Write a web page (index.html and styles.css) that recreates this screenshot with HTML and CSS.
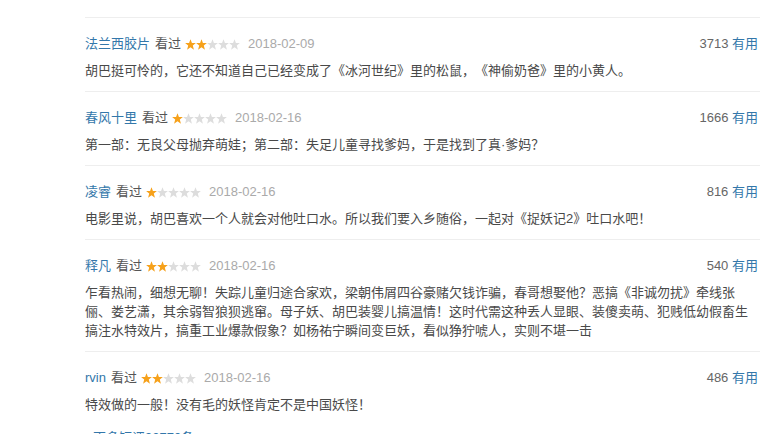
FILE: index.html
```html
<!DOCTYPE html>
<html lang="zh-CN">
<head>
    <meta charset="UTF-8">
    <meta name="viewport" content="width=device-width, initial-scale=1.0">
    <title>短评</title>
    <link rel="stylesheet" href="styles.css">
</head>
<body>
    <svg class="defs" width="0" height="0">
        <symbol id="star" viewBox="0 0 10 10">
            <polygon points="5,0.2 6.3,3.6 9.9,3.7 7.1,6 8.1,9.7 5,7.6 1.9,9.7 2.9,6 0.1,3.7 3.7,3.6"/>
        </symbol>
    </svg>

    <div class="comments">
        <!-- 短评 1 -->
        <div class="comment">
            <div class="comment-info">
                <a class="user" href="#">法兰西胶片</a>
                <span class="status">看过</span>
                <svg class="rating" width="55" height="11">
                    <use href="#star" x="0" width="11" height="11" class="on"/><use href="#star" x="11" width="11" height="11" class="on"/><use href="#star" x="22" width="11" height="11"/><use href="#star" x="33" width="11" height="11"/><use href="#star" x="44" width="11" height="11"/>
                </svg>
                <span class="time">2018-02-09</span>
                <span class="votes"><span class="count">3713</span> <a href="#">有用</a></span>
            </div>
            <p class="short">胡巴挺可怜的，它还不知道自己已经变成了《冰河世纪》里的松鼠，《神偷奶爸》里的小黄人。</p>
        </div>

        <!-- 短评 2 -->
        <div class="comment">
            <div class="comment-info">
                <a class="user" href="#">春风十里</a>
                <span class="status">看过</span>
                <svg class="rating" width="55" height="11">
                    <use href="#star" x="0" width="11" height="11" class="on"/><use href="#star" x="11" width="11" height="11"/><use href="#star" x="22" width="11" height="11"/><use href="#star" x="33" width="11" height="11"/><use href="#star" x="44" width="11" height="11"/>
                </svg>
                <span class="time">2018-02-16</span>
                <span class="votes"><span class="count">1666</span> <a href="#">有用</a></span>
            </div>
            <p class="short">第一部：无良父母抛弃萌娃；第二部：失足儿童寻找爹妈，于是找到了真·爹妈？</p>
        </div>

        <!-- 短评 3 -->
        <div class="comment">
            <div class="comment-info">
                <a class="user" href="#">凌睿</a>
                <span class="status">看过</span>
                <svg class="rating" width="55" height="11">
                    <use href="#star" x="0" width="11" height="11" class="on"/><use href="#star" x="11" width="11" height="11"/><use href="#star" x="22" width="11" height="11"/><use href="#star" x="33" width="11" height="11"/><use href="#star" x="44" width="11" height="11"/>
                </svg>
                <span class="time">2018-02-16</span>
                <span class="votes"><span class="count">816</span> <a href="#">有用</a></span>
            </div>
            <p class="short">电影里说，胡巴喜欢一个人就会对他吐口水。所以我们要入乡随俗，一起对《捉妖记2》吐口水吧！</p>
        </div>

        <!-- 短评 4 -->
        <div class="comment">
            <div class="comment-info">
                <a class="user" href="#">释凡</a>
                <span class="status">看过</span>
                <svg class="rating" width="55" height="11">
                    <use href="#star" x="0" width="11" height="11" class="on"/><use href="#star" x="11" width="11" height="11" class="on"/><use href="#star" x="22" width="11" height="11"/><use href="#star" x="33" width="11" height="11"/><use href="#star" x="44" width="11" height="11"/>
                </svg>
                <span class="time">2018-02-16</span>
                <span class="votes"><span class="count">540</span> <a href="#">有用</a></span>
            </div>
            <p class="short">乍看热闹，细想无聊！失踪儿童归途合家欢，梁朝伟屑四谷豪赌欠钱诈骗，春哥想娶他？恶搞《非诚勿扰》牵线张俪、娄艺潇，其余弱智狼狈逃窜。母子妖、胡巴装婴儿搞温情！这时代需这种丢人显眼、装傻卖萌、犯贱低幼假畜生搞注水特效片，搞重工业爆款假象？如杨祐宁瞬间变巨妖，看似狰狞唬人，实则不堪一击</p>
        </div>

        <!-- 短评 5 -->
        <div class="comment">
            <div class="comment-info">
                <a class="user" href="#">rvin</a>
                <span class="status">看过</span>
                <svg class="rating" width="55" height="11">
                    <use href="#star" x="0" width="11" height="11" class="on"/><use href="#star" x="11" width="11" height="11" class="on"/><use href="#star" x="22" width="11" height="11"/><use href="#star" x="33" width="11" height="11"/><use href="#star" x="44" width="11" height="11"/>
                </svg>
                <span class="time">2018-02-16</span>
                <span class="votes"><span class="count">486</span> <a href="#">有用</a></span>
            </div>
            <p class="short">特效做的一般！没有毛的妖怪肯定不是中国妖怪！</p>
        </div>

        <p class="more"><span class="arrow">›</span> <a href="#">更多短评92770条</a></p>
    </div>
</body>
</html>
```

FILE: styles.css
```css
* {
    box-sizing: border-box;
    margin: 0;
    padding: 0;
}

body {
    font-family: "Liberation Sans", Arial, "Noto Sans CJK SC", sans-serif;
    font-size: 13px;
    color: #494949;
    background-color: white;
    text-spacing-trim: space-all;
    overflow: hidden;
}

a {
    color: #37a;
    text-decoration: none;
}

.defs {
    position: absolute;
}

.comments {
    width: 675px;
    margin-left: 85px;
    padding-top: 17px;
}

.comment {
    border-top: 1px solid #eee;
    padding: 17px 0 11px;
}

.comment-info {
    display: flex;
    align-items: center;
    height: 18px;
    line-height: 18px;
}

.status {
    margin-left: 5px;
    color: #555;
}

.rating {
    margin-left: 4px;
    fill: #ddd;
}

.rating .on {
    fill: #f6a11b;
}

.time {
    margin-left: 8px;
    color: #aaa;
}

.votes {
    margin-left: auto;
    padding-right: 2px;
}

.count {
    color: #666;
}

.short {
    margin-top: 8px;
    line-height: 19px;
}

.more {
    padding-top: 4px;
    line-height: 18px;
}

.arrow {
    color: #666;
}
```
